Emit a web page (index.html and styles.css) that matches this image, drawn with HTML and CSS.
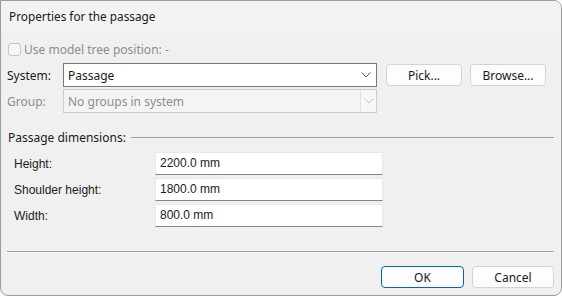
FILE: index.html
```html
<!DOCTYPE html>
<html lang="en">
<head>
    <meta charset="UTF-8">
    <title>Properties for the passage</title>
    <link rel="stylesheet" href="styles.css">
</head>
<body>
    <div class="window">
        <div class="titlebar">Properties for the passage</div>
        <div class="content">
            <label class="check-row">
                <span class="checkbox"></span>
                <span class="muted">Use model tree position: -</span>
            </label>

            <div class="field-row system-row">
                <span class="field-label">System:</span>
                <div class="combo">
                    <span class="combo-text">Passage</span>
                    <svg class="chevron" width="10" height="6" viewBox="0 0 10 6"><path d="M0.5 0.5 L5 5 L9.5 0.5" fill="none" stroke="#5a5a5a" stroke-width="1"/></svg>
                </div>
                <button class="btn pick">Pick...</button>
                <button class="btn browse">Browse...</button>
            </div>

            <div class="field-row group-row">
                <span class="field-label muted">Group:</span>
                <div class="combo disabled">
                    <span class="combo-text">No groups in system</span>
                    <span class="combo-arrow">
                        <svg width="10" height="6" viewBox="0 0 10 6"><path d="M0.5 0.5 L5 5 L9.5 0.5" fill="none" stroke="#c4c4c4" stroke-width="1"/></svg>
                    </span>
                </div>
            </div>

            <div class="group-header">
                <span>Passage dimensions:</span>
                <span class="rule"></span>
            </div>

            <div class="dims">
                <div class="dim-row">
                    <span class="dim-label">Height:</span>
                    <div class="dim-input">2200.0 mm</div>
                </div>
                <div class="dim-row">
                    <span class="dim-label">Shoulder height:</span>
                    <div class="dim-input">1800.0 mm</div>
                </div>
                <div class="dim-row">
                    <span class="dim-label">Width:</span>
                    <div class="dim-input">800.0 mm</div>
                </div>
            </div>

            <div class="separator"></div>

            <div class="actions">
                <button class="btn ok">OK</button>
                <button class="btn cancel">Cancel</button>
            </div>
        </div>
    </div>
</body>
</html>
```

FILE: styles.css
```css
body {
    margin: 0;
    background: #ffffff;
    font-family: "Noto Sans", "Liberation Sans", sans-serif;
    font-size: 12px;
    color: #1a1a1a;
}
.window {
    width: 562px;
    height: 296px;
    box-sizing: border-box;
    border: 1px solid #9c9c9c;
    border-radius: 0 8px 8px 8px;
    overflow: hidden;
    background: #f0f0f0;
}
.titlebar {
    height: 30px;
    line-height: 30px;
    padding-left: 8px;
    background: #f3f3f3;
    font-size: 11.8px;
    color: #1a1a1a;
}
.content {
    padding: 0 7px 0 6px;
}
.muted {
    color: #8d8d8d;
}
.check-row {
    display: flex;
    align-items: center;
    gap: 3px;
    height: 14px;
    margin-top: 11px;
    margin-left: 1px;
}
.checkbox {
    width: 11px;
    height: 11px;
    border: 1px solid #c6c6c6;
    border-radius: 3px;
    background: #f5f5f5;
}
.field-row {
    display: flex;
    align-items: center;
    height: 24px;
}
.system-row {
    margin-top: 7px;
}
.group-row {
    margin-top: 2px;
}
.field-label {
    width: 56px;
}
.combo {
    width: 314px;
    height: 24px;
    box-sizing: border-box;
    border: 1px solid #7a7a7a;
    background: #ffffff;
    display: flex;
    align-items: center;
    justify-content: space-between;
    padding: 0 5px 0 4px;
}
.combo.disabled {
    border-color: #cccccc;
    background: #f4f4f4;
    padding-right: 0;
    color: #8d8d8d;
}
.combo-arrow {
    width: 15px;
    height: 22px;
    border-left: 1px solid #e2e2e2;
    background: #f7f7f7;
    display: flex;
    align-items: center;
    justify-content: center;
}
.btn {
    font-family: inherit;
    font-size: 12px;
    color: #1a1a1a;
    height: 22px;
    box-sizing: border-box;
    background: #fdfdfd;
    border: 1px solid #d3d3d3;
    border-radius: 4px;
    padding: 0;
}
.pick {
    width: 76px;
    margin-left: 9px;
}
.browse {
    width: 76px;
    margin-left: 8px;
}
.group-header {
    display: flex;
    align-items: center;
    gap: 5px;
    height: 16px;
    margin-top: 16px;
    padding-left: 1px;
}
.rule {
    flex: 1;
    height: 1px;
    background: #a0a0a0;
}
.dims {
    display: flex;
    flex-direction: column;
    gap: 3px;
    margin-top: 7px;
    font-family: "Liberation Sans", sans-serif;
}
.dim-row {
    display: flex;
    align-items: center;
    height: 23px;
}
.dim-label {
    width: 141px;
    padding-left: 7px;
}
.dim-input {
    width: 228px;
    height: 23px;
    box-sizing: border-box;
    background: #ffffff;
    border: 1px solid #e8e8e8;
    border-bottom-color: #868686;
    padding-left: 4px;
    line-height: 20px;
}
.separator {
    margin-top: 24px;
    height: 1px;
    background: #a0a0a0;
    border-bottom: 1px solid #fafafa;
}
.actions {
    display: flex;
    justify-content: flex-end;
    gap: 8px;
    margin-top: 13px;
}
.ok {
    width: 83px;
    border-color: #0067c0;
}
.cancel {
    width: 82px;
}
```
